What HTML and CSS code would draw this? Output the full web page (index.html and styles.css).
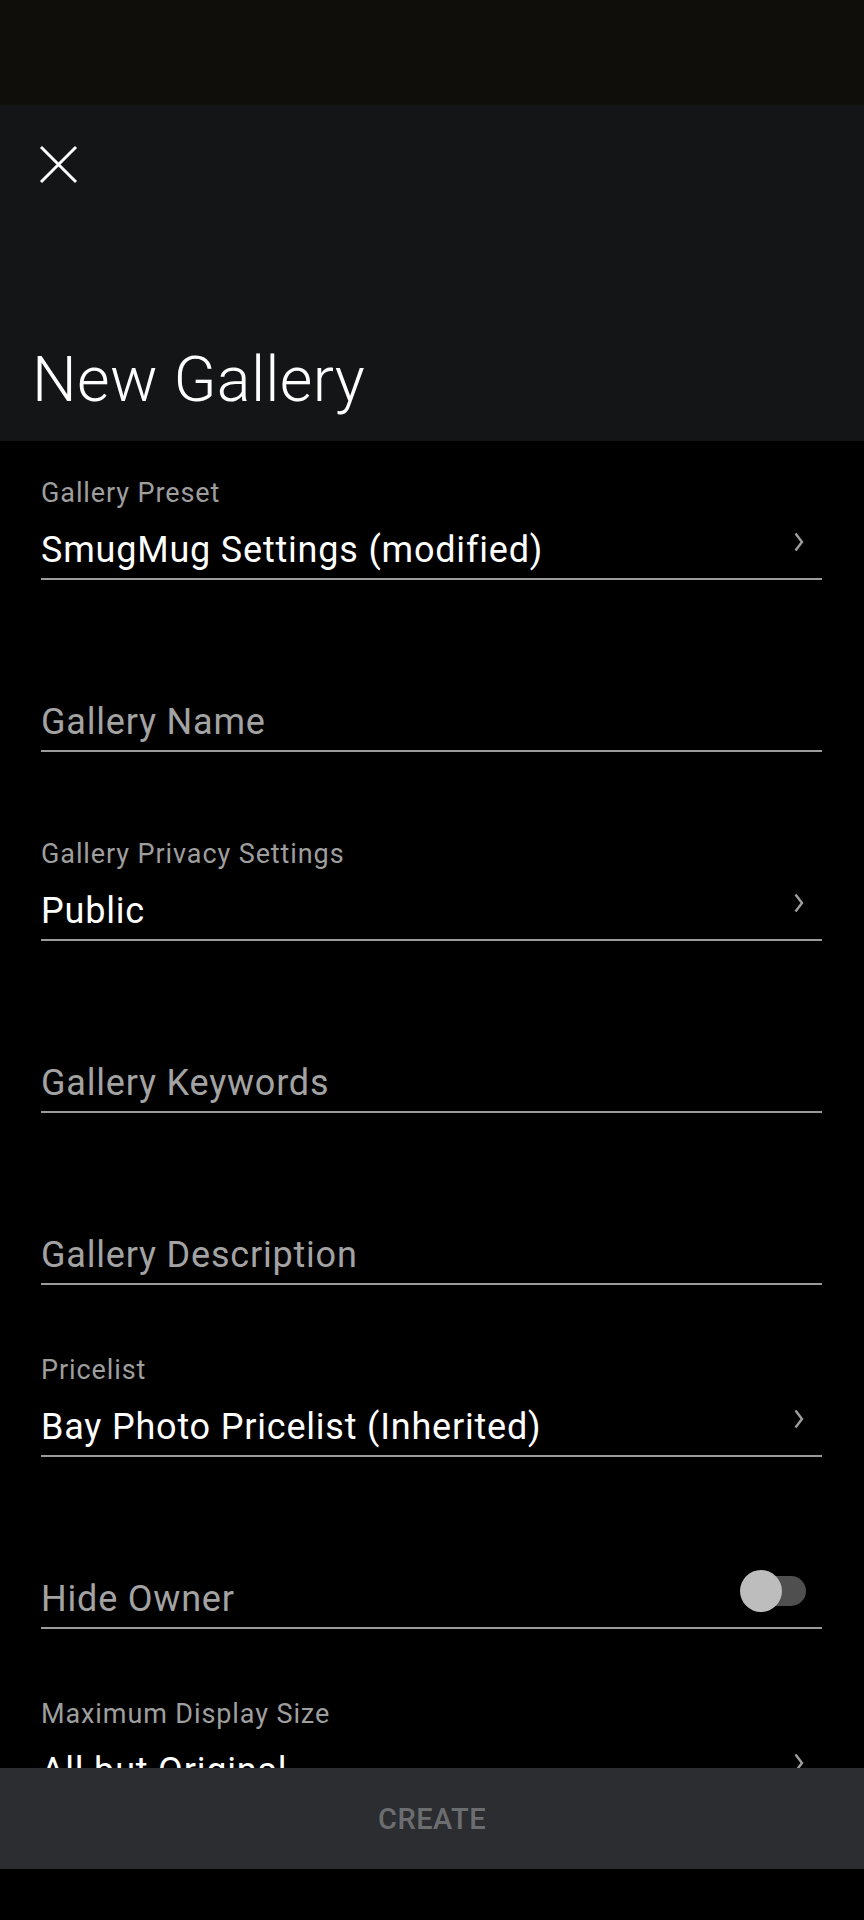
FILE: index.html
```html
<!DOCTYPE html>
<html lang="en">
<head>
  <meta charset="UTF-8">
  <meta name="viewport" content="width=device-width, initial-scale=1.0">
  <title>New Gallery</title>
  <link rel="stylesheet" href="styles.css">
</head>
<body>
  <div class="status-bar"></div>

  <header class="app-bar">
    <button class="close-btn" type="button" aria-label="Close">
      <svg width="40" height="40" viewBox="0 0 40 40">
        <path d="M2 2 L37 37 M37 2 L2 37" stroke="#fff" stroke-width="3" fill="none"/>
      </svg>
    </button>
    <h1 class="title">New Gallery</h1>
  </header>

  <main class="form">
    <div class="field">
      <div class="label">Gallery Preset</div>
      <div class="value-row">
        <span class="value">SmugMug Settings (modified)</span>
        <svg class="chevron" width="10" height="20" viewBox="0 0 10 20">
          <path d="M1.5 1.5 L8 10 L1.5 18.5" stroke="#9e9e9e" stroke-width="2.4" fill="none"/>
        </svg>
      </div>
    </div>

    <div class="field field--helper">
      <div class="value-row">
        <span class="placeholder">Gallery Name</span>
      </div>
    </div>

    <div class="field">
      <div class="label">Gallery Privacy Settings</div>
      <div class="value-row">
        <span class="value">Public</span>
        <svg class="chevron" width="10" height="20" viewBox="0 0 10 20">
          <path d="M1.5 1.5 L8 10 L1.5 18.5" stroke="#9e9e9e" stroke-width="2.4" fill="none"/>
        </svg>
      </div>
    </div>

    <div class="field">
      <div class="value-row">
        <span class="placeholder">Gallery Keywords</span>
      </div>
    </div>

    <div class="field">
      <div class="value-row">
        <span class="placeholder">Gallery Description</span>
      </div>
    </div>

    <div class="field">
      <div class="label">Pricelist</div>
      <div class="value-row">
        <span class="value">Bay Photo Pricelist (Inherited)</span>
        <svg class="chevron" width="10" height="20" viewBox="0 0 10 20">
          <path d="M1.5 1.5 L8 10 L1.5 18.5" stroke="#9e9e9e" stroke-width="2.4" fill="none"/>
        </svg>
      </div>
    </div>

    <div class="field">
      <div class="value-row">
        <span class="placeholder">Hide Owner</span>
        <span class="switch">
          <span class="switch-track"></span>
          <span class="switch-thumb"></span>
        </span>
      </div>
    </div>

    <div class="field">
      <div class="label">Maximum Display Size</div>
      <div class="value-row">
        <span class="value">All but Original</span>
        <svg class="chevron" width="10" height="20" viewBox="0 0 10 20">
          <path d="M1.5 1.5 L8 10 L1.5 18.5" stroke="#9e9e9e" stroke-width="2.4" fill="none"/>
        </svg>
      </div>
    </div>
  </main>

  <footer class="action-bar">
    <button class="create-btn" type="button">CREATE</button>
  </footer>
  <div class="nav-bar"></div>
</body>
</html>
```

FILE: styles.css
```css
* {
  box-sizing: border-box;
}
html, body {
  margin: 0;
  padding: 0;
}
body {
  width: 864px;
  height: 1920px;
  overflow: hidden;
  background: #000;
  font-family: Roboto, "Liberation Sans", sans-serif;
  display: flex;
  flex-direction: column;
}
.status-bar {
  height: 105px;
  flex: none;
  background: #100e0a;
}
.app-bar {
  height: 336px;
  flex: none;
  background: #141517;
  display: flex;
  flex-direction: column;
  justify-content: space-between;
  padding: 40px 0 24px 0;
}
.close-btn {
  width: 40px;
  height: 40px;
  margin-left: 39px;
  padding: 0;
  border: 0;
  background: none;
}
.close-btn svg {
  display: block;
}
.title {
  margin: 0 0 0 32px;
  font-size: 63px;
  font-weight: 300;
  line-height: 74px;
  letter-spacing: 0.3px;
  color: #fff;
}
.form {
  flex: 1;
  overflow: hidden;
  padding: 0 42px 0 41px;
}
.field {
  height: 172px;
  display: flex;
  flex-direction: column;
  justify-content: flex-end;
  border-bottom: 2px solid #9b9b9b;
}
.field:first-child {
  height: 139px;
}
.field--helper {
  margin-bottom: 17px;
}
.label {
  font-size: 27px;
  line-height: 32px;
  letter-spacing: 0.9px;
  margin-bottom: 17px;
  color: #9e9e9e;
}
.value-row {
  display: flex;
  justify-content: space-between;
  align-items: flex-start;
  height: 52px;
  padding-bottom: 4px;
}
.value, .placeholder {
  font-size: 36px;
  line-height: 48px;
  letter-spacing: 0.8px;
  white-space: nowrap;
}
.value {
  color: #fff;
}
.placeholder {
  color: #a3a3a3;
}
.chevron {
  margin-top: 6px;
  margin-right: 18px;
  flex: none;
}
.switch {
  position: relative;
  width: 66px;
  height: 42px;
  margin-top: -5px;
  margin-right: 16px;
  flex: none;
}
.switch-track {
  position: absolute;
  right: 0;
  top: 6px;
  width: 58px;
  height: 30px;
  border-radius: 15px;
  background: #4f4f4f;
}
.switch-thumb {
  position: absolute;
  left: 0;
  top: 0;
  width: 42px;
  height: 42px;
  border-radius: 50%;
  background: #bdbdbd;
}
.action-bar {
  height: 101px;
  flex: none;
  background: #2c2d31;
  display: flex;
  align-items: center;
  justify-content: center;
}
.create-btn {
  border: 0;
  background: none;
  padding: 0;
  font-family: Roboto, "Liberation Sans", sans-serif;
  font-size: 29px;
  font-weight: 500;
  letter-spacing: 0.5px;
  color: #6c6d70;
}
.nav-bar {
  height: 51px;
  flex: none;
  background: #000;
}
```
